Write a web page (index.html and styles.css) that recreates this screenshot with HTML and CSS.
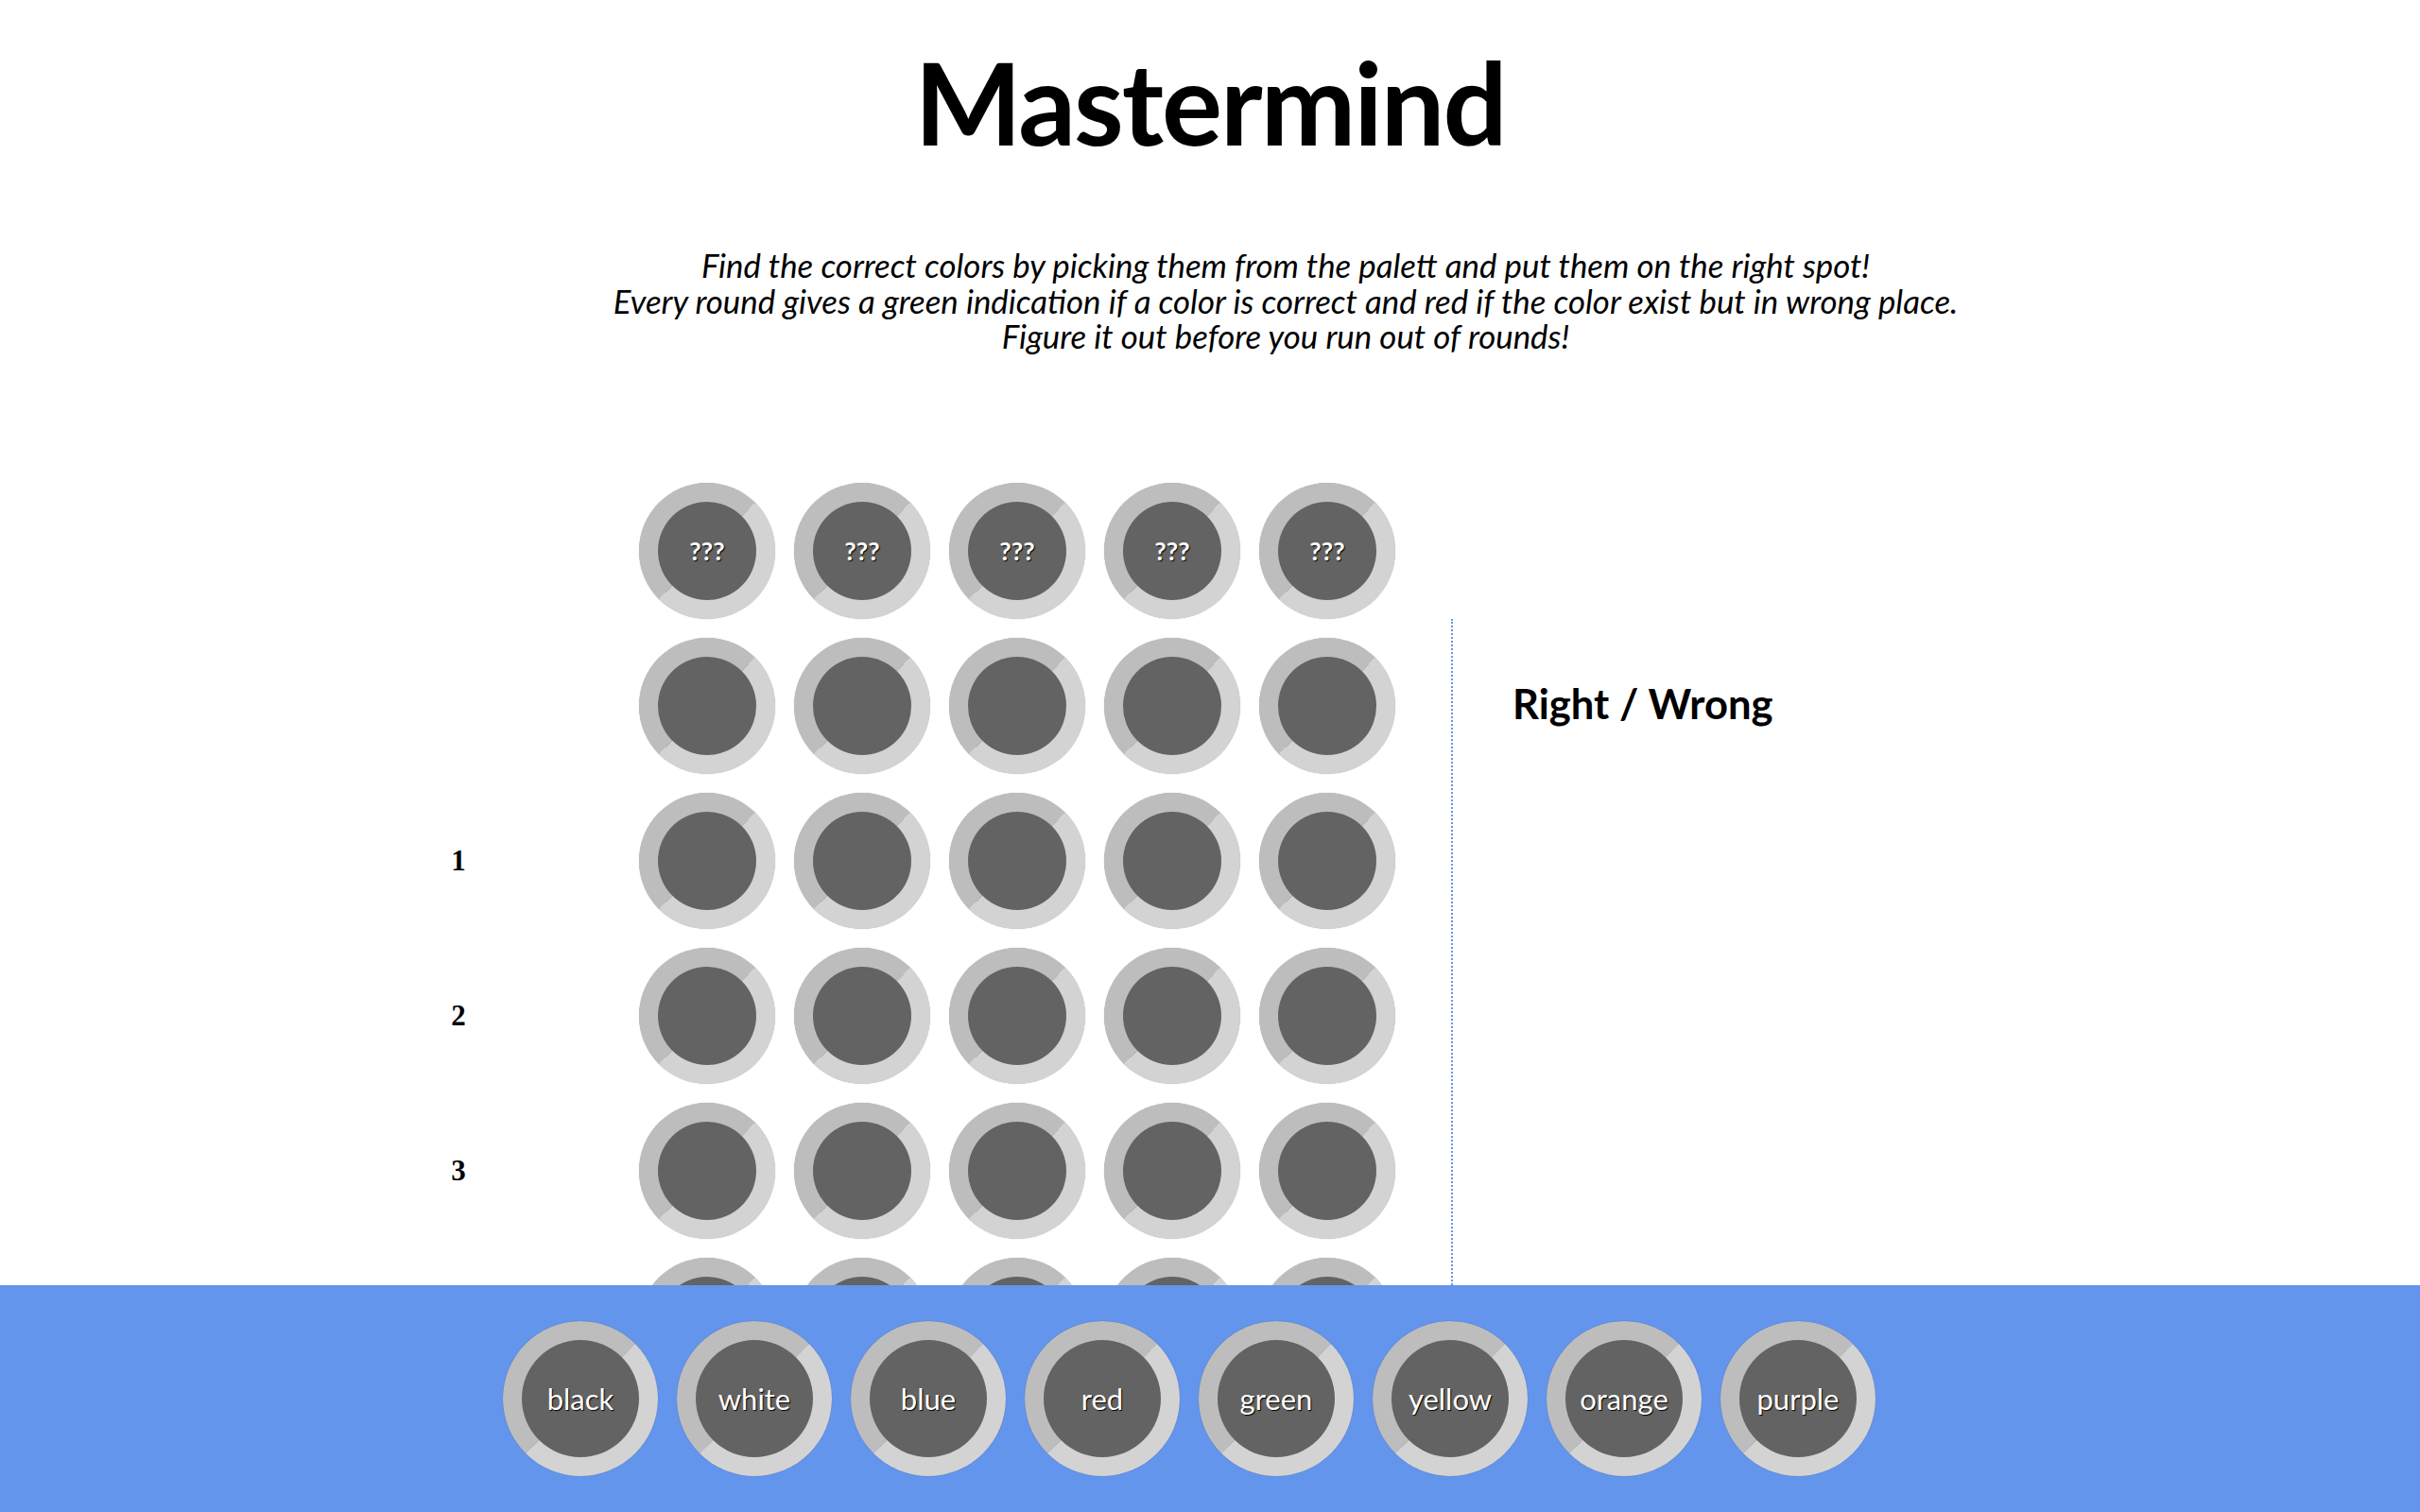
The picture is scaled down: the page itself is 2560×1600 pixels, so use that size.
FILE: index.html
```html
<!DOCTYPE html>
<html lang="en">
<head>
<meta charset="utf-8">
<title>Mastermind</title>
<link rel="stylesheet" href="styles.css">
</head>
<body>
<header class="head">
  <h1 class="title">Mastermind</h1>
  <p class="intro">Find the correct colors by picking them from the palett and put them on the right spot!<br>Every round gives a green indication if a color is correct and red if the color exist but in wrong place.<br>Figure it out before you run out of rounds!</p>
</header>

<section class="board">
  <div class="row answer">
    <span class="num"></span>
    <div class="pegs">
      <div class="peg"><span class="q">???</span></div>
      <div class="peg"><span class="q">???</span></div>
      <div class="peg"><span class="q">???</span></div>
      <div class="peg"><span class="q">???</span></div>
      <div class="peg"><span class="q">???</span></div>
    </div>
  </div>
  <div class="game">
    <div class="guesses">
      <div class="row"><span class="num"></span><div class="pegs"><div class="peg"></div><div class="peg"></div><div class="peg"></div><div class="peg"></div><div class="peg"></div></div></div>
      <div class="row"><span class="num">1</span><div class="pegs"><div class="peg"></div><div class="peg"></div><div class="peg"></div><div class="peg"></div><div class="peg"></div></div></div>
      <div class="row"><span class="num">2</span><div class="pegs"><div class="peg"></div><div class="peg"></div><div class="peg"></div><div class="peg"></div><div class="peg"></div></div></div>
      <div class="row"><span class="num">3</span><div class="pegs"><div class="peg"></div><div class="peg"></div><div class="peg"></div><div class="peg"></div><div class="peg"></div></div></div>
      <div class="row"><span class="num"></span><div class="pegs"><div class="peg"></div><div class="peg"></div><div class="peg"></div><div class="peg"></div><div class="peg"></div></div></div>
    </div>
    <aside class="verdict">
      <h2 class="verdict-title">Right / Wrong</h2>
    </aside>
  </div>
</section>

<footer class="palette">
  <div class="swatches">
    <div class="swatch"><span>black</span></div>
    <div class="swatch"><span>white</span></div>
    <div class="swatch"><span>blue</span></div>
    <div class="swatch"><span>red</span></div>
    <div class="swatch"><span>green</span></div>
    <div class="swatch"><span>yellow</span></div>
    <div class="swatch"><span>orange</span></div>
    <div class="swatch"><span>purple</span></div>
  </div>
</footer>
</body>
</html>
```

FILE: styles.css
```css
* { box-sizing: content-box; }

body {
  margin: 0;
  background: #ffffff;
  color: #000000;
  font-family: "Lato", "Open Sans", sans-serif;
}

.head {
  text-align: center;
}

.title {
  margin: 36px 0 0;
  font-size: 120px;
  font-weight: 700;
  letter-spacing: -2px;
  line-height: normal;
}

.intro {
  margin: 82px 0 0;
  padding-left: 160px;
  font-size: 34.8px;
  font-style: italic;
  line-height: 37.5px;
}

.board {
  margin: 136px 0 0 385px;
}

.row {
  display: flex;
  align-items: center;
}

.num {
  width: 200px;
  margin-right: 91px;
  text-align: center;
  font-family: "Liberation Serif", "Times New Roman", serif;
  font-weight: 700;
  font-size: 31px;
}

.pegs {
  display: flex;
  gap: 20px;
}

.peg,
.swatch {
  display: flex;
  align-items: center;
  justify-content: center;
  width: 104px;
  height: 104px;
  border-radius: 50%;
  border: 20px solid;
  border-color: #bdbdbd #d3d3d3 #d3d3d3 #bdbdbd;
  background: #636363;
  box-shadow: 0 0 1px rgba(0, 0, 0, 0.35);
}

.q {
  color: #ffffff;
  font-size: 27px;
  font-weight: 700;
  text-shadow: 1px 1px 1px #000000;
}

.game {
  display: flex;
  align-items: stretch;
}

.guesses {
  display: flex;
  flex-direction: column;
  gap: 20px;
  padding-top: 20px;
}

.verdict {
  margin-left: 59px;
  padding: 20px 0 0 63px;
  border-left: 2px dotted #6495ed;
}

.verdict-title {
  margin: -3px 0 0;
  font-size: 43.6px;
  font-weight: 700;
  line-height: 144px;
}

.palette {
  position: fixed;
  left: 0;
  right: 0;
  bottom: 0;
  height: 240px;
  background: #6495ed;
  display: flex;
  align-items: center;
  justify-content: center;
  padding-right: 44px;
}

.swatches {
  display: flex;
  gap: 20px;
}

.swatch {
  width: 124px;
  height: 124px;
}

.swatch span {
  color: #ffffff;
  font-size: 31px;
  text-shadow: 1px 1px 1px #000000;
}
```
